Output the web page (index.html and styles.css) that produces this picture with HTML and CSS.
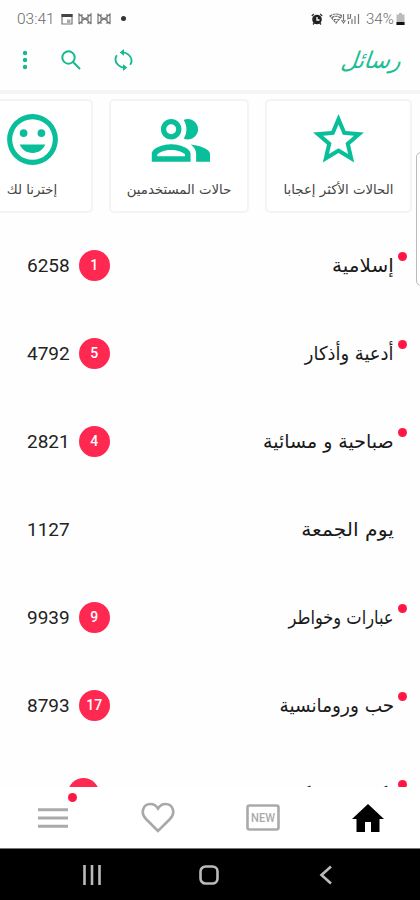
FILE: index.html
```
<!doctype html>
<html lang="ar" dir="rtl">
<head>
<meta charset="utf-8">
<title>رسائل</title>
<link rel="stylesheet" href="styles.css">
</head>

<body>
<div class="app">
	<div class="status" dir="ltr">
		<span class="time">03:41</span>
		<svg class="s-cal" viewBox="0 0 12 12"><path d="M1 1.500h10v9.500H1z" fill="none" stroke="#777" stroke-width="1.200"/><path d="M.5 1h11v3H.5z" fill="#444"/><path d="M6 6.500h3.500V10H6z" fill="#aaa"/></svg>
		<svg class="s-mail" viewBox="0 0 14 12"><path d="M1 11V1l6 5.500 6-5.500v10M1 11l6-6 6 6M4 1v10M10 1v10" fill="none" stroke="#777" stroke-width="1.200"/></svg>
		<svg class="s-mail" viewBox="0 0 14 12"><path d="M1 11V1l6 5.500 6-5.500v10M1 11l6-6 6 6M4 1v10M10 1v10" fill="none" stroke="#777" stroke-width="1.200"/></svg>
		<i class="s-dot"></i>
		<svg class="s-alarm" viewBox="0 0 12 12"><circle cx="6" cy="6.500" r="4.800" fill="#222"/><path d="M.8 3l2-2M11.200 3l-2-2M2 11.500l1.500-2M10 11.500l-1.500-2" stroke="#333" stroke-width="1.300"/><path d="M6 4v3h2.500" fill="none" stroke="#fff" stroke-width="1.300"/></svg>
		<svg class="s-signal" viewBox="0 0 31 12"><path d="M1 3q6-4 12 0L7 10zM3 4.500q4-2.500 8 0M5 6.500h4" fill="none" stroke="#666" stroke-width="1.200" stroke-dasharray="2.500 .8"/><path d="M14.500 1v7M12.500 7l2 3 2-3M19 1v4M21.500 1v4M18 6l4-1M19.500 11V8M23 11V6M26 11V3M29.500 11V1" fill="none" stroke="#777" stroke-width="1.200"/></svg>
		<span class="percent">34%</span>
		<svg class="s-batt" viewBox="0 0 9 12"><path d="M3 0h3v1.500h2.500V12h-8V1.500H3z" fill="#bbb"/><path d="M.5 9h8v3h-8z" fill="#111"/></svg>
	</div>

	<div class="header">
		<h1><span>رسائل</span></h1>
		<div class="tools" dir="ltr">
			<svg class="more" viewBox="0 0 6 20"><circle cx="3" cy="3" r="2.200"/><circle cx="3" cy="10" r="2.200"/><circle cx="3" cy="17" r="2.200"/></svg>
			<svg class="search" viewBox="0 0 20 20"><circle cx="7.500" cy="7.500" r="6.200"/><path d="M12 12l7 7"/></svg>
			<svg class="sync" viewBox="0 0 20 22"><path d="M8 3c6-.5 10.500 4.500 10.500 8.500 0 1.500-.4 3-1.500 4.500M12 19C6 19.500 1.500 14.500 1.500 10.500c0-1.500.4-3 1.500-4.500"/><path class="fill" d="M10.500-.5v7L6 3zM9.500 15.500v7L14 19z"/></svg>
		</div>
	</div>

	<div class="cards">
		<div class="card c1">
			<svg viewBox="0 0 24 24"><path d="M22 9.240l-7.190-.62L12 2 9.190 8.630 2 9.240l5.460 4.730L5.820 21 12 17.270 18.180 21l-1.630-7.030L22 9.240zM12 15.400l-3.760 2.270 1-4.280-3.320-2.880 4.380-.38L12 6.100l1.710 4.040 4.380.38-3.320 2.880 1 4.280L12 15.400z"/></svg>
			<p>الحالات الأكثر إعجابا</p>
		</div>
		<div class="card c2">
			<svg viewBox="1 1 22 22"><path d="M9 13.750c-2.340 0-7 1.170-7 3.500V20h14v-2.750c0-2.330-4.660-3.500-7-3.500zM4 18v-.7c.84-.78 2.870-1.550 5-1.550s4.160.77 5 1.550v.7H4zM9 12c2.050 0 3.700-1.650 3.700-3.700S11.050 4.600 9 4.600 5.300 6.250 5.300 8.300 6.950 12 9 12zm0-5.500a1.800 1.800 0 1 1 0 3.600 1.800 1.800 0 0 1 0-3.600zm7.040 7.310c1.160.84 1.960 1.960 1.960 3.440V20h5v-2.750c0-2.020-4.500-3.170-6.960-3.440zM15 12c1.930 0 3.700-1.570 3.700-3.700S16.930 4.600 15 4.600c-.54 0-1.040.13-1.500.35.63.89 1 2.180 1 3.350s-.37 2.460-1 3.350c.46.22.96.35 1.500.35z"/></svg>
			<p>حالات المستخدمين</p>
		</div>
		<div class="card c3">
			<svg viewBox="0 0 24 24"><path fill-rule="evenodd" d="M12 2a10 10 0 1 0 0 20 10 10 0 0 0 0-20zm0 2a8 8 0 1 1 0 16 8 8 0 0 1 0-16z"/><circle cx="8.500" cy="9.500" r="1.500"/><circle cx="15.500" cy="9.500" r="1.500"/><path d="M7 14h10c-.8 2.100-2.700 3.300-5 3.300S7.800 16.100 7 14z"/></svg>
			<p>إخترنا لك</p>
		</div>
	</div>

	<ul class="list">
		<li class="new"><span class="name n1">إسلامية</span><b>1</b><em>6258</em></li>
		<li class="new"><span class="name n2">أدعية وأذكار</span><b>5</b><em>4792</em></li>
		<li class="new"><span class="name n3">صباحية و مسائية</span><b>4</b><em>2821</em></li>
		<li><span class="name n4">يوم الجمعة</span><em>1127</em></li>
		<li class="new"><span class="name n5">عبارات وخواطر</span><b>9</b><em>9939</em></li>
		<li class="new"><span class="name n6">حب ورومانسية</span><b>17</b><em>8793</em></li>
		<li class="new"><span class="name n7">نكت مضحكة</span><b>3</b><em>748</em></li>
	</ul>

	<div class="tabs">
		<a><svg class="home" viewBox="0 0 32 28"><path d="M16 0L0 15h4.500v13h8.500V18h6v10h8.500V15H32z"/></svg></a>
		<a><svg class="fresh" viewBox="0 0 34 27"><rect x="1.500" y="1.500" width="31" height="24" rx="2"/><text x="17" y="17.500" textLength="24" lengthAdjust="spacingAndGlyphs">NEW</text></svg></a>
		<a><svg class="heart" viewBox="0 0 34 31"><path d="M17 29L5 17C-1 11 2 2 9.500 2 13 2 15.500 4 17 6.500 18.500 4 21 2 24.500 2 32 2 35 11 29 17z"/></svg></a>
		<a class="menu"><svg class="bars" viewBox="0 0 30 20"><path d="M0 1.700h30M0 10h30M0 18.300h30"/></svg></a>
	</div>

	<div class="sysbar" dir="ltr">
		<a><svg viewBox="0 0 20 20"><path d="M2.500 0v20M10 0v20M17.500 0v20"/></svg></a>
		<a><svg viewBox="0 0 20 20"><rect x="1.500" y="1.500" width="17" height="17" rx="5"/></svg></a>
		<a><svg viewBox="0 0 20 20"><path d="M15 1.500L5.500 10l9.500 8.500"/></svg></a>
	</div>
	<i class="handle"></i>
</div>
</body>
</html>
```
FILE: styles.css
```
*{margin:0;padding:0;list-style:none;box-sizing:border-box;}
body{background:#fff;font-family:Roboto,"DejaVu Sans",sans-serif;color:#222;}
svg{display:block;flex:none;}
.app{position:relative;display:flex;flex-direction:column;width:420px;height:900px;overflow:hidden;background:#fefefe;}

.status{display:flex;align-items:center;height:36px;padding:1px 15px 0 17px;color:#6a6a6a;font-size:15px;flex:none;}
.time{width:37px;font-weight:300;font-size:15.5px;}
.s-cal{width:12px;height:12px;margin-left:7px;}
.s-mail{width:14px;height:12px;margin-left:5px;}
.s-dot{width:5px;height:5px;margin-left:10px;border-radius:50%;background:#333;}
.s-alarm{width:12px;height:12px;margin-left:auto;}
.s-signal{width:31px;height:12px;margin-left:6px;}
.percent{width:28px;margin-left:6px;font-weight:300;}
.s-batt{width:9px;height:12px;margin-left:2px;}

.header{display:flex;justify-content:space-between;align-items:center;height:54px;padding:0 17px 6px 22px;flex:none;}
.header h1{display:flex;width:59px;color:#22bd95;font-family:"DejaVu Sans",sans-serif;font-size:23px;font-weight:200;line-height:34px;}
.header h1 span{transform:skewX(-20deg);transform-origin:right center;}
.tools{display:flex;align-items:center;fill:#15b98f;}
.more{width:6px;height:20px;}
.search{width:20px;height:20px;margin-left:33px;}
.sync{width:19px;height:22px;margin-left:33px;overflow:visible;}
.search,.sync{fill:none;stroke:#15b98f;stroke-width:2;}
.sync .fill{fill:#15b98f;stroke:none;}

.cards{display:flex;gap:16px;height:131px;padding:5px 8px 0;border-top:4px solid #f5f5f5;flex:none;}
.card{display:flex;flex-direction:column;align-items:center;height:114px;padding-top:8px;border:2px solid #f4f4f4;border-radius:5px;background:#fff;flex:none;}
.c1{width:147px;}
.c2{width:140px;}
.c3{width:122px;}
.card svg{width:61px;height:61px;fill:#09bf9a;}
.card p{margin-top:10px;color:#444;font-family:"DejaVu Sans",sans-serif;font-size:13.3px;line-height:20px;white-space:nowrap;}

.list{height:566px;overflow:hidden;flex:none;}
.list li{position:relative;display:flex;align-items:center;height:88px;padding:0 26px 0 27px;}
.new:before{content:"";position:absolute;right:13px;top:31px;width:9px;height:9px;border-radius:50%;background:#ff1744;}
.name{margin-left:auto;color:#1a1a1a;font-family:"DejaVu Sans Condensed","DejaVu Sans",sans-serif;font-size:19px;white-space:nowrap;transform-origin:right center;}
.n1{transform:scaleX(1.17);}
.n2{transform:scaleX(1.05);}
.n3{transform:scaleX(1.11);}
.n4{transform:scaleX(1.19);}
.n5{transform:scaleX(.95);}
.n6{transform:scaleX(1.08);}
.n7{transform:scaleX(1.15);}
.list b{display:flex;align-items:center;justify-content:center;width:31px;height:31px;margin-left:9px;border-radius:50%;background:#ff2851;color:#fff;font-size:14px;font-weight:500;}
.list em{font-size:19px;font-style:normal;font-weight:400;color:#222;}

.tabs{display:flex;height:61px;background:#fff;flex:none;}
.tabs a{display:flex;align-items:center;justify-content:center;width:105px;}
.home{width:32px;height:28px;fill:#000;}
.fresh{width:34px;height:27px;fill:none;stroke:#aaa;stroke-width:2.600;}
.fresh text{fill:#aaa;stroke:none;font:500 12px Roboto,sans-serif;text-anchor:middle;direction:ltr;}
.heart{width:34px;height:31px;fill:none;stroke:#a8a8a8;stroke-width:2.600;}
.bars{width:30px;height:20px;stroke:#aaa;stroke-width:3;}
.tabs .menu{position:relative;}
.menu:after{content:"";position:absolute;left:68px;top:6px;width:9px;height:9px;border-radius:50%;background:#ff1744;}

.sysbar{display:flex;justify-content:center;height:52px;padding:1px 2px 0 0;border-top:1px solid #777;background:#000;flex:none;}
.sysbar a{display:flex;align-items:center;justify-content:center;width:117px;}
.sysbar svg{width:20px;height:20px;fill:none;stroke:#bbb;stroke-width:2.600;}

.handle{position:absolute;left:416px;top:152px;width:12px;height:134px;border:1px solid #bbb;border-radius:5px;background:#fff;}
```
